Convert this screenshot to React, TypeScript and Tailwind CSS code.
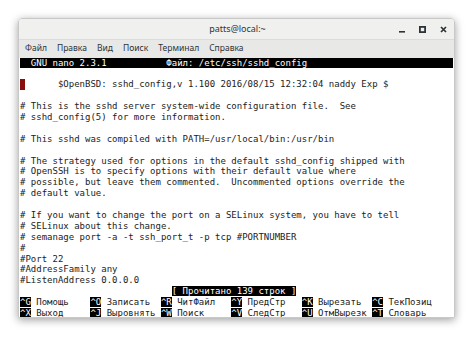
const lines: string[] = [
  "",
  "       $OpenBSD: sshd_config,v 1.100 2016/08/15 12:32:04 naddy Exp $",
  "",
  "# This is the sshd server system-wide configuration file.  See",
  "# sshd_config(5) for more information.",
  "",
  "# This sshd was compiled with PATH=/usr/local/bin:/usr/bin",
  "",
  "# The strategy used for options in the default sshd_config shipped with",
  "# OpenSSH is to specify options with their default value where",
  "# possible, but leave them commented.  Uncommented options override the",
  "# default value.",
  "",
  "# If you want to change the port on a SELinux system, you have to tell",
  "# SELinux about this change.",
  "# semanage port -a -t ssh_port_t -p tcp #PORTNUMBER",
  "#",
  "#Port 22",
  "#AddressFamily any",
  "#ListenAddress 0.0.0.0",
];

const shortcuts: [string, string][][] = [
  [
    ["^G", "Помощь"],
    ["^O", "Записать"],
    ["^R", "ЧитФайл"],
    ["^Y", "ПредСтр"],
    ["^K", "Вырезать"],
    ["^C", "ТекПозиц"],
  ],
  [
    ["^X", "Выход"],
    ["^J", "Выровнять"],
    ["^W", "Поиск"],
    ["^V", "СледСтр"],
    ["^U", "ОтмВырезк"],
    ["^T", "Словарь"],
  ],
];

const menu = ["Файл", "Правка", "Вид", "Поиск", "Терминал", "Справка"];

function Row({ children }: { children?: React.ReactNode }) {
  return <div className="h-[10.9px] whitespace-pre">{children}</div>;
}

export default function App() {
  return (
    <div className="min-h-[338px] bg-white pt-[18px] pl-[18px]">
      <div className="w-[437px] h-[300px] flex flex-col rounded-t-[4px] overflow-hidden shadow-[0_2px_9px_rgba(0,0,0,0.38)] border border-[#c8c8c8]">
        {/* title bar */}
        <div className="h-[21px] shrink-0 grid grid-cols-[1fr_auto_1fr] items-center bg-[#f0f0ef] border-b border-[#dcdcdc] font-['Noto_Sans',sans-serif] text-[9px] text-[#2e3436]">
          <div />
          <div className="pl-[2px]">patts@local:~</div>
          <div className="flex justify-end items-center gap-[14px] pr-[7px]">
            <svg width="6" height="8" viewBox="0 0 6 8">
              <rect x="0" y="6" width="6" height="1.6" fill="#2e3436" />
            </svg>
            <svg width="7" height="7" viewBox="0 0 7 7">
              <rect x="0.9" y="0.9" width="5.2" height="5.2" fill="none" stroke="#2e3436" strokeWidth="1.8" />
            </svg>
            <svg width="7" height="7" viewBox="0 0 7 7">
              <path d="M1 1L6 6M6 1L1 6" stroke="#2e3436" strokeWidth="1.7" />
            </svg>
          </div>
        </div>
        {/* menu bar */}
        <div className="h-[17.5px] shrink-0 flex items-center gap-[10px] pl-[6px] bg-[#e8e8e7] font-['Noto_Sans',sans-serif] text-[8.5px] text-[#2e3436]">
          {menu.map((m) => (
            <span key={m}>{m}</span>
          ))}
        </div>
        {/* terminal */}
        <div className="flex-1 bg-white pl-[1px] font-['DejaVu_Sans_Mono',monospace] text-[9px] leading-[10.9px] text-[#222]">
          <Row>
            <div className="bg-black text-white w-[80ch]">
              {"  GNU nano 2.3.1           Файл: /etc/ssh/sshd_config"}
            </div>
          </Row>
          {lines.map((l, i) => (
            <Row key={i}>
              {i === 1 ? (
                <>
                  <span className="inline-block w-[1ch] h-[10.9px] align-top bg-[#8b0e0e]" />
                  {l.slice(1)}
                </>
              ) : (
                l
              )}
            </Row>
          ))}
          <Row>
            {" ".repeat(28)}
            <span className="bg-black text-white">[ Прочитано 139 строк ]</span>
          </Row>
          {shortcuts.map((row, r) => (
            <div key={r} className="h-[10.9px] flex whitespace-pre">
              {row.map(([k, label]) => (
                <div key={k} className="w-[13ch] shrink-0">
                  <span className="bg-black text-white">{k}</span>
                  {" " + label}
                </div>
              ))}
            </div>
          ))}
        </div>
      </div>
    </div>
  );
}
